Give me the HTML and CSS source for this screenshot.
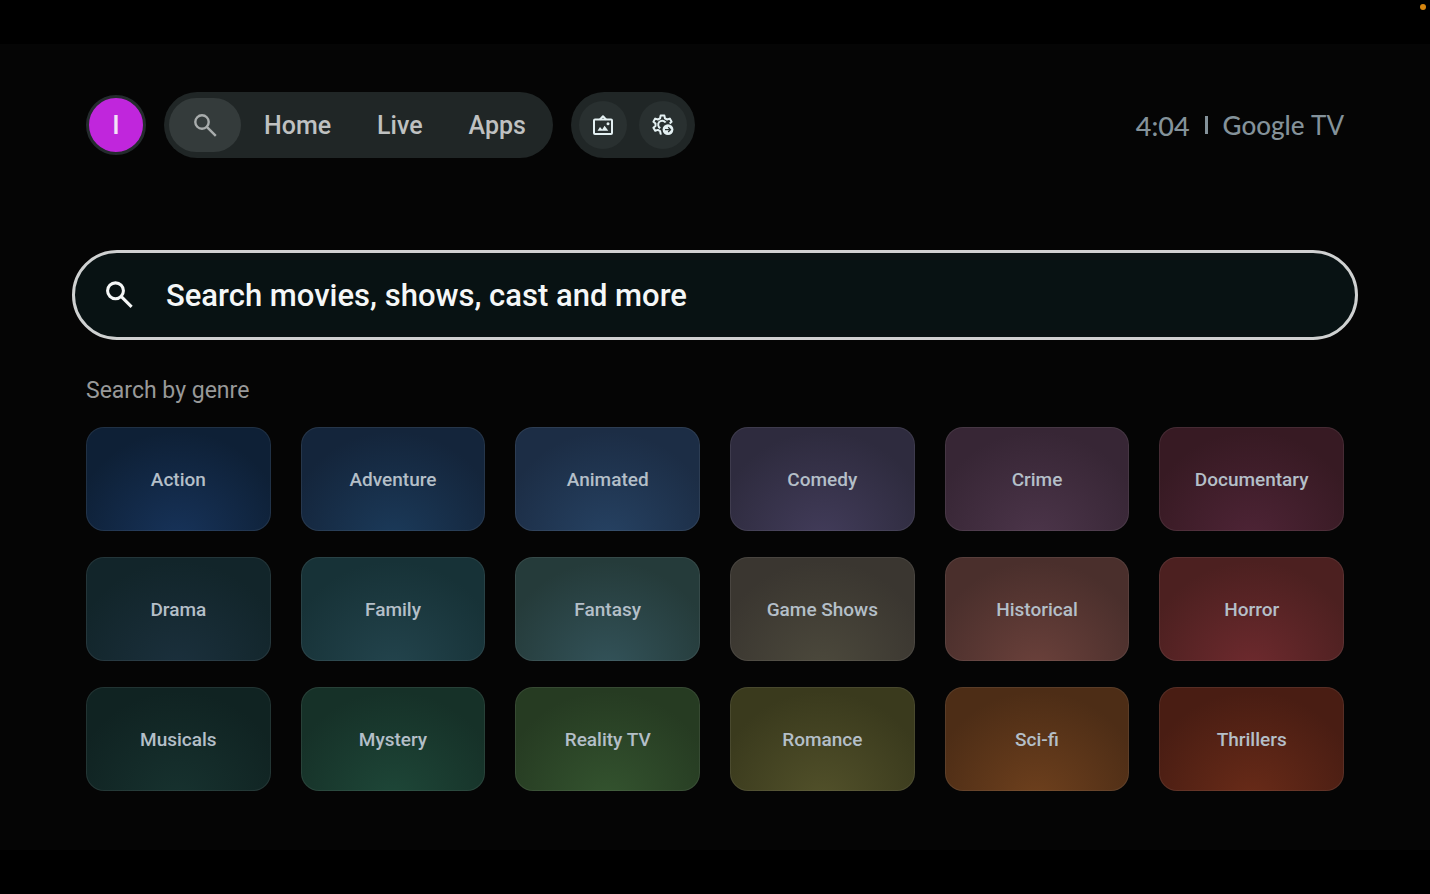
FILE: index.html
```
<!DOCTYPE html>
<html lang="en">
<head>
  <meta charset="UTF-8">
  <meta name="viewport" content="width=device-width, initial-scale=1.0">
  <title>Google TV - Search</title>
  <link rel="stylesheet" href="styles.css">
</head>
<body>
  <span class="recording-dot"></span>
  <div class="screen">
    <header class="top-bar">
      <button class="avatar" aria-label="Profile">I</button>
      <nav class="tabs">
        <a class="tab tab-search" href="#search" aria-label="Search">
          <svg viewBox="0 0 24 24" width="24" height="24" fill="none" stroke="currentColor" stroke-width="2.4">
            <circle cx="9" cy="9" r="6.7"/>
            <path d="M13.8 13.8L22.8 22.8"/>
          </svg>
        </a>
        <a class="tab" href="#home">Home</a>
        <a class="tab" href="#live">Live</a>
        <a class="tab" href="#apps">Apps</a>
      </nav>
      <div class="actions">
        <button class="action" aria-label="Ambient mode">
          <svg viewBox="0 0 24 24" width="24" height="24" fill="none" stroke="currentColor" stroke-width="2" stroke-linejoin="round">
            <rect x="3" y="6.6" width="18" height="14.4" rx="1"/>
            <path d="M8.8 6.6L12 3.2L15.2 6.6"/>
            <path d="M6.5 17.8L9 14L11.2 16.4L13.6 12.8L17.3 17.8Z" fill="currentColor" stroke="none"/>
            <circle cx="17" cy="10.8" r="1.5" fill="currentColor" stroke="none"/>
          </svg>
        </button>
        <button class="action" aria-label="Settings">
          <svg viewBox="0 0 24 24" width="24" height="24" fill="none" stroke="currentColor" stroke-width="2" stroke-linejoin="round">
            <path d="M10.6 20.8H9.6L9.1 18.1L6.9 16.9L4.2 17.8L2.4 14.7L4.5 12.9V10.5L2.4 8.7L4.2 5.6L6.9 6.5L9.1 5.3L9.6 2.6H13.4L13.9 5.3L16.1 6.5L18.8 5.6L20.6 8.7L18.7 10.4"/>
            <path d="M9.3 15.2A4 4 0 1 1 14.6 9.6"/>
            <circle cx="17" cy="16.6" r="5.4" fill="currentColor" stroke="none"/>
            <path class="icon-cut" d="M14 16.6H19.4M17.2 14.2L19.6 16.6L17.2 19" stroke-width="1.3"/>
          </svg>
        </button>
      </div>
      <div class="status">
        <span class="clock">4:04</span>
        <span class="divider"></span>
        <span class="brand">Google <span class="brand-tv">TV</span></span>
      </div>
    </header>

    <main>
      <label class="search-box">
        <svg viewBox="0 0 24 24" width="28" height="28" fill="none" stroke="currentColor" stroke-width="2.6">
          <circle cx="9" cy="8.4" r="6.8"/>
          <path d="M13.8 13.2L22.8 22.2"/>
        </svg>
        <input class="search-input" type="text" aria-label="Search" placeholder="Search movies, shows, cast and more">
      </label>

      <h2 class="section-title">Search by genre</h2>
      <div class="genres">
        <button class="genre action-genre">Action</button>
        <button class="genre adventure">Adventure</button>
        <button class="genre animated">Animated</button>
        <button class="genre comedy">Comedy</button>
        <button class="genre crime">Crime</button>
        <button class="genre documentary">Documentary</button>
        <button class="genre drama">Drama</button>
        <button class="genre family">Family</button>
        <button class="genre fantasy">Fantasy</button>
        <button class="genre game-shows">Game Shows</button>
        <button class="genre historical">Historical</button>
        <button class="genre horror">Horror</button>
        <button class="genre musicals">Musicals</button>
        <button class="genre mystery">Mystery</button>
        <button class="genre reality">Reality TV</button>
        <button class="genre romance">Romance</button>
        <button class="genre sci-fi">Sci-fi</button>
        <button class="genre thrillers">Thrillers</button>
      </div>
    </main>
  </div>
</body>
</html>
```
FILE: styles.css
```
* {
  box-sizing: border-box;
}

body {
  margin: 0;
  padding: 44px 0;
  min-height: 100vh;
  display: flex;
  flex-direction: column;
  background-color: #000;
  font-family: Roboto, "Open Sans", sans-serif;
}

button, input {
  font-family: inherit;
  border: none;
  padding: 0;
}

button {
  cursor: pointer;
}

svg {
  display: block;
  flex-shrink: 0;
}

.recording-dot {
  position: absolute;
  top: 4px;
  right: 4px;
  width: 6px;
  height: 6px;
  border-radius: 50%;
  background-color: #d8860f;
}

.screen {
  flex: 1;
  padding: 48px 72px;
  background-color: #050505;
}

/* Top bar */
.top-bar {
  display: flex;
  align-items: center;
  height: 66px;
  padding: 0 14px;
}

.avatar {
  width: 60px;
  height: 60px;
  margin-right: 18px;
  border: 3px solid #242b2d;
  border-radius: 50%;
  background-color: #c026dc;
  color: #f3e3f7;
  font-size: 26px;
  font-weight: 500;
}

.tabs {
  display: flex;
  align-items: center;
  height: 66px;
  padding: 0 4px 0 5px;
  margin-right: 18px;
  border-radius: 33px;
  background-color: #202626;
}

.tab {
  padding: 0 23px;
  color: #bfc1c1;
  font-size: 25px;
  font-weight: 500;
  text-decoration: none;
}

.tab-search {
  display: flex;
  align-items: center;
  justify-content: center;
  width: 72px;
  height: 54px;
  padding: 0;
  border-radius: 27px;
  background-color: #343b3b;
  color: #a9adad;
}

.actions {
  display: flex;
  align-items: center;
  gap: 12px;
  height: 66px;
  padding: 0 8px;
  border-radius: 33px;
  background-color: #202626;
}

.action {
  display: flex;
  align-items: center;
  justify-content: center;
  width: 48px;
  height: 48px;
  border-radius: 50%;
  background-color: #293030;
  color: #e4f0f2;
}

.icon-cut {
  stroke: #293030;
}

.status {
  display: flex;
  align-items: center;
  margin-left: auto;
  color: #84929a;
  font-family: Lato, sans-serif;
}

.clock {
  font-size: 27px;
  font-weight: 500;
}

.divider {
  width: 3px;
  height: 18px;
  margin: 0 15px;
  background-color: #84929a;
}

.brand {
  font-size: 26px;
  font-weight: 500;
}

.brand-tv {
  font-weight: 400;
}

/* Search box */
.search-box {
  display: flex;
  align-items: center;
  gap: 33px;
  height: 90px;
  margin-top: 92px;
  padding: 0 30px;
  border: 3px solid #cfd1d1;
  border-radius: 45px;
  background-color: #081213;
  color: #f5f7f7;
}

.search-input {
  flex: 1;
  background: none;
  outline: none;
  color: #f5f7f7;
  font-size: 31px;
  font-weight: 500;
}

.search-input::placeholder {
  color: #f5f7f7;
  opacity: 1;
}

/* Genres */
.section-title {
  margin: 37px 14px 22px;
  color: #989999;
  font-size: 23px;
  font-weight: 400;
  line-height: 28px;
}

.genres {
  display: grid;
  grid-template-columns: repeat(6, 1fr);
  gap: 26px 30px;
  padding: 0 14px;
}

.genre {
  height: 104px;
  border: 1px solid rgba(255, 255, 255, 0.08);
  border-radius: 18px;
  background: radial-gradient(circle at 50% 110%, var(--glow), var(--base) 110px);
  background-origin: border-box;
  color: #b4bfc8;
  font-size: 19px;
  font-weight: 500;
}

.action-genre {
  --base: #0e2036;
  --glow: #17335a;
}

.adventure {
  --base: #14253b;
  --glow: #1b3a5a;
}

.animated {
  --base: #1c2d45;
  --glow: #264263;
}

.comedy {
  --base: #2e2b3e;
  --glow: #423c5a;
}

.crime {
  --base: #372635;
  --glow: #4c354a;
}

.documentary {
  --base: #371a23;
  --glow: #4e2436;
}

.drama {
  --base: #12252a;
  --glow: #1b303d;
}

.family {
  --base: #173237;
  --glow: #23444d;
}

.fantasy {
  --base: #253b3a;
  --glow: #33535a;
}

.game-shows {
  --base: #3a3630;
  --glow: #4c493c;
}

.historical {
  --base: #4a2f2c;
  --glow: #6b413b;
}

.horror {
  --base: #4c2020;
  --glow: #6e2a2e;
}

.musicals {
  --base: #102322;
  --glow: #17322f;
}

.mystery {
  --base: #163128;
  --glow: #1e4738;
}

.reality {
  --base: #263b22;
  --glow: #34542f;
}

.romance {
  --base: #3a3a1d;
  --glow: #52512a;
}

.sci-fi {
  --base: #4d2d16;
  --glow: #6e401d;
}

.thrillers {
  --base: #491d13;
  --glow: #692b18;
}

@media (max-width: 900px) {
  .genres {
    grid-template-columns: repeat(3, 1fr);
  }
}
```
